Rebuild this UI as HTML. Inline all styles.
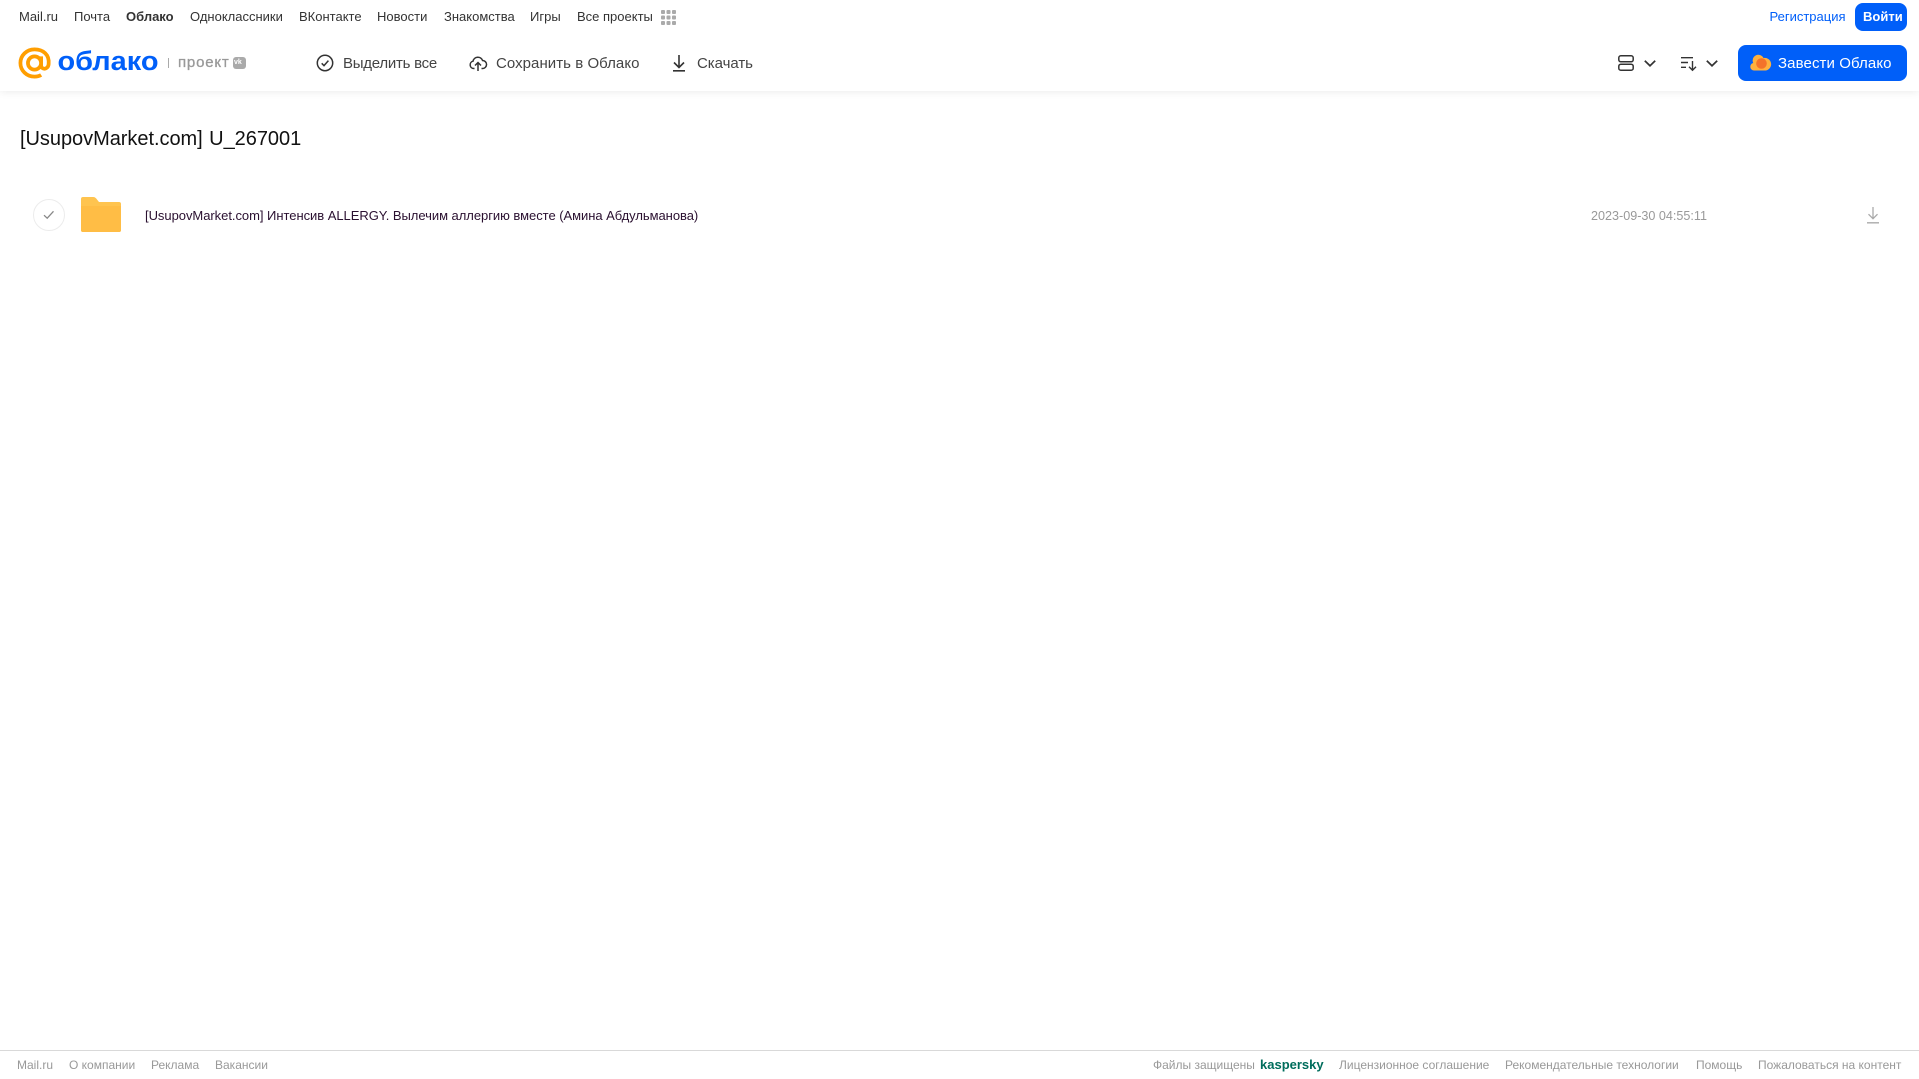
<!DOCTYPE html>
<html lang="ru"><head><meta charset="utf-8"><title>Облако</title>
<style>
html,body{margin:0;padding:0;background:#fff;width:1919px;height:1079px;overflow:hidden;font-family:"Liberation Sans",sans-serif}
.t{position:absolute;white-space:nowrap;line-height:18px}
.n{font-size:13px;top:8px;color:#333}
.b{font-size:15px;top:54.500px;color:#444}
.f{font-size:12px;top:1056px;color:#999}
svg{position:absolute;overflow:visible}
#hd{position:absolute;left:0;top:0;width:1919px;height:91px;background:#fff;box-shadow:0 1px 8px rgba(0,0,0,.08)}
</style></head><body>
<div id="hd"></div>
<span class="t n" style="left:19px">Mail.ru</span>
<span class="t n" style="left:74px">Почта</span>
<span class="t n" style="left:126px;font-weight:bold">Облако</span>
<span class="t n" style="left:190px">Одноклассники</span>
<span class="t n" style="left:299px">ВКонтакте</span>
<span class="t n" style="left:377px">Новости</span>
<span class="t n" style="left:444px">Знакомства</span>
<span class="t n" style="left:530px">Игры</span>
<span class="t n" style="left:577px">Все проекты</span>
<svg style="left:661px;top:10px" width="15" height="15" fill="#aaa"><rect x="0" y="0" width="4" height="4" rx="1"/><rect x="5.500" y="0" width="4" height="4" rx="1"/><rect x="11" y="0" width="4" height="4" rx="1"/><rect x="0" y="5.500" width="4" height="4" rx="1"/><rect x="5.500" y="5.500" width="4" height="4" rx="1"/><rect x="11" y="5.500" width="4" height="4" rx="1"/><rect x="0" y="11" width="4" height="4" rx="1"/><rect x="5.500" y="11" width="4" height="4" rx="1"/><rect x="11" y="11" width="4" height="4" rx="1"/></svg>
<span class="t n" style="left:1769.500px;color:#005ff9">Регистрация</span>
<div style="position:absolute;left:1855px;top:3px;width:52px;height:28px;background:#005ff9;border-radius:8px"></div>
<span class="t n" style="left:1863px;color:#fff;font-weight:bold">Войти</span>

<svg style="left:18px;top:47px" width="34" height="32" viewBox="0 0 36 34" fill="none"><path d="M24.500 17a7 7 0 1 1-14 0 7 7 0 0 1 14 0zm0-7v9.500c0 5 7.500 5 8-1.500C33.500 8 26.500 2.500 17.500 2.500 9 2.500 2.500 9 2.500 17s6.500 14.500 15 14.500c2.500 0 5-.5 7-1.800" stroke="#ff9e00" stroke-width="4"/></svg>
<svg style="left:56px;top:44px" width="106" height="34"><text x="1.500" y="26" font-family="Liberation Sans,sans-serif" font-size="27" font-weight="bold" fill="#005ff9" textLength="101" lengthAdjust="spacingAndGlyphs">облако</text></svg>
<div style="position:absolute;left:168px;top:58px;width:1px;height:10px;background:#aaa"></div>
<span class="t" style="left:178px;top:54px;font-size:15px;color:#999;letter-spacing:.8px;-webkit-text-stroke:.3px #999">проект</span>
<div style="position:absolute;left:233px;top:57px;width:13px;height:12px;background:#aaa;border-radius:3px"></div>
<span class="t" style="left:234px;top:58px;font-size:7px;line-height:10px;font-weight:bold;color:#fff">vk</span>

<svg style="left:316px;top:54px" width="18" height="18" viewBox="0 0 18 18" fill="none" stroke="#333" stroke-width="1.500"><circle cx="9" cy="9" r="7.700"/><path d="M5.700 9.300l2.300 2.300 4.400-5"/></svg>
<span class="t b" style="left:343px;letter-spacing:-.25px">Выделить все</span>
<svg style="left:469px;top:54px" width="18" height="18" viewBox="0 0 18 18" fill="none" stroke="#333" stroke-width="1.500"><path d="M5.500 14.500H4.800A3.700 3.700 0 0 1 4 7.200 5 5 0 0 1 13.600 6.500 4 4 0 0 1 13.500 14.500H12.500"/><path d="M9 17V9M6 11.500L9 8.500l3 3"/></svg>
<span class="t b" style="left:496px;letter-spacing:.05px">Сохранить в Облако</span>
<svg style="left:671px;top:54px" width="16" height="18" viewBox="0 0 16 18" fill="none" stroke="#333" stroke-width="1.600"><path d="M8 1v12M3 8.500l5 5 5-5M2 16.800h12"/></svg>
<span class="t b" style="left:697px;letter-spacing:-.05px">Скачать</span>

<svg style="left:1618px;top:55px" width="16" height="16" fill="none" stroke="#333" stroke-width="1.500"><rect x=".8" y=".8" width="14.400" height="6" rx="2"/><rect x=".8" y="9.200" width="14.400" height="6" rx="2"/></svg>
<svg style="left:1644px;top:60px" width="12" height="7" fill="none" stroke="#333" stroke-width="1.700"><path d="M.8 .8L6 5.800 11.200 .8"/></svg>
<svg style="left:1681px;top:55px" width="16" height="16" fill="none" stroke="#333" stroke-width="1.400"><path d="M0 2.700h12M0 7.500h7M0 12.300h5M11.500 6v9M8 11.800l3.500 3.500 3.500-3.500"/></svg>
<svg style="left:1706px;top:60px" width="12" height="7" fill="none" stroke="#333" stroke-width="1.700"><path d="M.8 .8L6 5.800 11.200 .8"/></svg>
<div style="position:absolute;left:1738px;top:45px;width:169px;height:36px;background:#005ff9;border-radius:8px"></div>
<svg style="left:1750px;top:54px" width="20" height="17" viewBox="0 0 20 17"><path d="M4 16.500a3.800 3.800 0 0 1-.8-7.500A5.500 5.500 0 0 1 13.500 4a6 6 0 0 1 2.500 12.500z" fill="#ffb13d"/><circle cx="11.500" cy="9.500" r="5.300" fill="#f4732a"/></svg>
<span class="t b" style="left:1778px;color:#fff;letter-spacing:.1px">Завести Облако</span>

<span class="t" style="left:20px;top:127px;font-size:20px;line-height:24px;color:#111;letter-spacing:-.04px;word-spacing:1px">[UsupovMarket.com] U_267001</span>

<div style="position:absolute;left:33px;top:199px;width:30px;height:30px;border:1px solid #ececec;border-radius:50%"></div>
<svg style="left:43px;top:210px" width="12" height="10" fill="none" stroke="#888" stroke-width="1.300"><path d="M1 5.200l3.200 3L10.500 1.300"/></svg>
<svg style="left:81px;top:197px" width="40" height="35" viewBox="0 0 40 35"><path d="M2 0h10c2 0 3 1 4 2.500L18 5h20a2 2 0 0 1 2 2v26a2 2 0 0 1-2 2H2a2 2 0 0 1-2-2V2a2 2 0 0 1 2-2z" fill="#ffc44f"/><path d="M0 9h40v24a2 2 0 0 1-2 2H2a2 2 0 0 1-2-2z" fill="#ffbd45"/></svg>
<span class="t" style="left:145px;top:207px;font-size:13px;color:#2a1030;letter-spacing:-.04px">[UsupovMarket.com] Интенсив ALLERGY. Вылечим аллергию вместе (Амина Абдульманова)</span>
<span class="t" style="left:1591px;top:207px;font-size:12.600px;color:#999">2023-09-30 04:55:11</span>
<svg style="left:1866px;top:207px" width="14" height="17" fill="none" stroke="#aaa" stroke-width="1.300"><path d="M7 0v11.500M2.500 7.200L7 11.700l4.500-4.500M1 15.800h12"/></svg>

<div style="position:absolute;left:0;top:1050px;width:1919px;height:1px;background:#d9d9d9"></div>
<span class="t f" style="left:17px">Mail.ru</span>
<span class="t f" style="left:69px">О компании</span>
<span class="t f" style="left:151px">Реклама</span>
<span class="t f" style="left:215px">Вакансии</span>
<span class="t f" style="left:1153px">Файлы защищены</span>
<span class="t f" style="left:1260px;color:#006d5c;font-weight:bold;font-size:13px">kaspersky</span>
<span class="t f" style="left:1339px">Лицензионное соглашение</span>
<span class="t f" style="left:1505px">Рекомендательные технологии</span>
<span class="t f" style="left:1696px">Помощь</span>
<span class="t f" style="left:1758px">Пожаловаться на контент</span>
</body></html>
